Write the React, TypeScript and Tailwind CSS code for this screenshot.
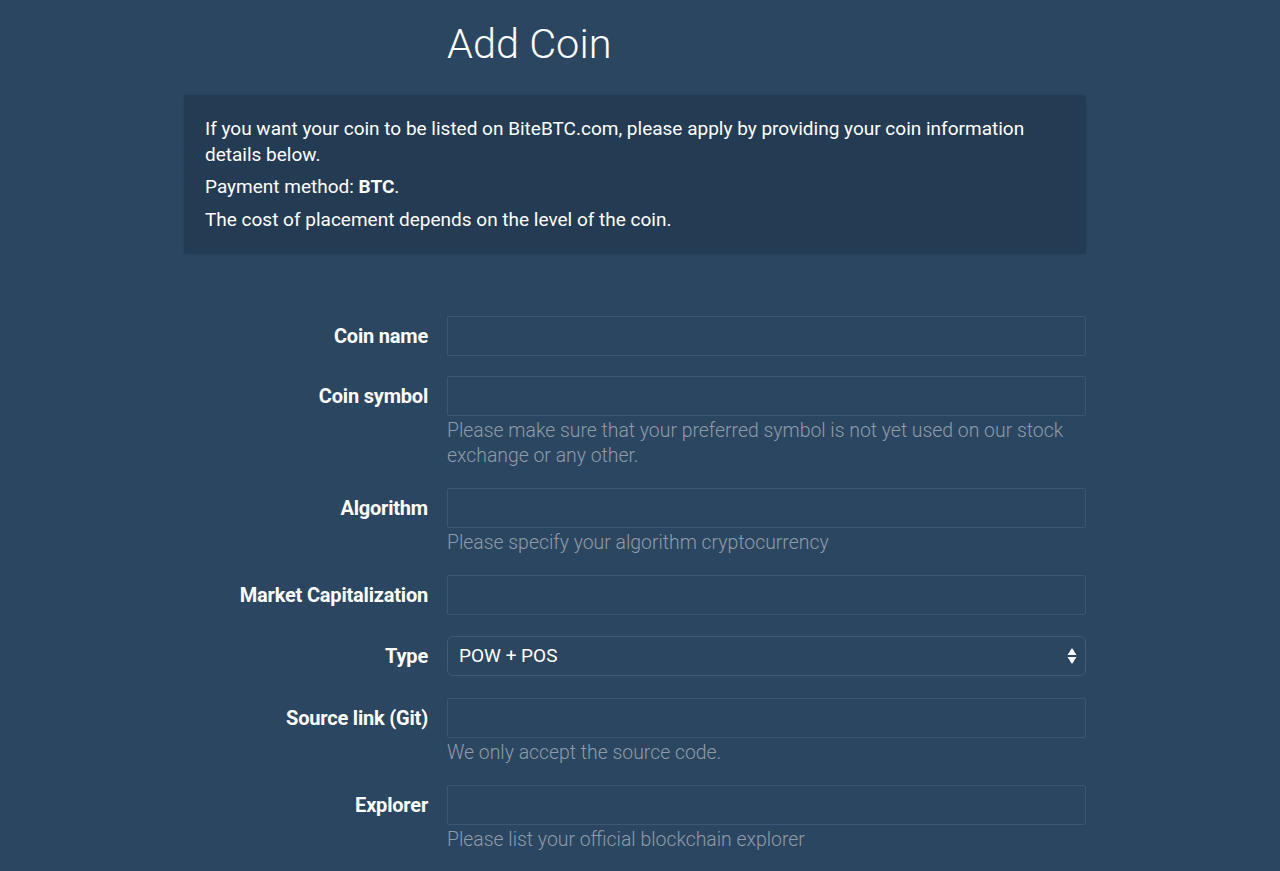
import React from "react";

const font = { fontFamily: "Roboto, 'Open Sans', sans-serif" };

function Row({ label, help, children, cls = "mb-[20px]" }: { label: string; help?: string; children?: React.ReactNode; cls?: string }) {
  return (
    <div className={"flex gap-[19px] " + cls}>
      <div className="w-[244px] h-[40px] flex items-center justify-end">
        <span className="text-[20px] font-bold text-white tracking-[-0.2px]">{label}</span>
      </div>
      <div className="w-[639px]">
        {children ?? (
          <div className="h-[40px] border border-[#3a5874] rounded-[2px] bg-[#2b4660]" />
        )}
        {help && (
          <p className="mt-[2px] text-[19.4px] leading-[25px] font-light text-[#8f9ca8]">{help}</p>
        )}
      </div>
    </div>
  );
}

export default function App() {
  return (
    <div className="min-h-[871px] bg-[#2b4660] text-white overflow-hidden" style={font}>
      <div className="ml-[184px] w-[902px]">
        <h1 className="ml-[263px] pt-[20px] text-[41.5px] leading-[48px] font-light text-white">Add Coin</h1>
        <div className="mt-[27px] h-[159px] bg-[#243c53] rounded-[3px] px-[21px] pt-[21px] text-[19px] leading-[26px] text-white shadow-[0_0_2px_rgba(0,0,0,0.15)]">
          <p>If you want your coin to be listed on BiteBTC.com, please apply by providing your coin information details below.</p>
          <p className="mt-[6px]">Payment method: <b>BTC</b>.</p>
          <p className="mt-[7px]">The cost of placement depends on the level of the coin.</p>
        </div>
        <div className="mt-[62px]">
          <Row label="Coin name" />
          <Row label="Coin symbol" help="Please make sure that your preferred symbol is not yet used on our stock exchange or any other." />
          <Row label="Algorithm" help="Please specify your algorithm cryptocurrency" />
          <Row label="Market Capitalization" cls="mb-[21px]" />
          <Row label="Type" cls="mb-[22px]">
            <div className="h-[40px] border border-[#3f5d78] rounded-[6px] bg-[#2b4660] flex items-center justify-between pl-[11px] pr-[8px]">
              <span className="text-[19px] text-white">POW + POS</span>
              <svg width="10" height="20" viewBox="0 0 10 20">
                <path d="M5 2 L9.5 9 L0.5 9 Z" fill="#ffffff" />
                <path d="M5 18 L9.5 11 L0.5 11 Z" fill="#ffffff" />
              </svg>
            </div>
          </Row>
          <Row label="Source link (Git)" help="We only accept the source code." />
          <Row label="Explorer" help="Please list your official blockchain explorer" />
        </div>
      </div>
    </div>
  );
}
